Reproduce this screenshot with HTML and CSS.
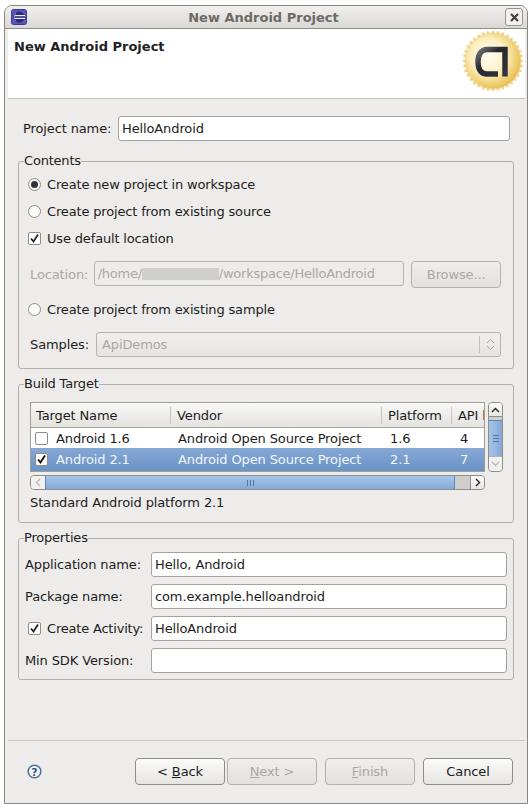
FILE: index.html
```html
<!DOCTYPE html>
<html lang="en">
<head>
<meta charset="UTF-8">
<meta name="viewport" content="width=device-width, initial-scale=1.0">
<title>New Android Project</title>
<link rel="stylesheet" href="styles.css">
</head>
<body>

    <div class="window">
        <div class="titlebar">
            <svg class="app-icon" width="16" height="16" viewBox="0 0 16 16">
                <rect x="0.5" y="0.5" width="15" height="15" rx="2" fill="#5a55b8" stroke="#3d3892"/>
                <circle cx="8" cy="8" r="5.6" fill="#2d2870"/>
                <rect x="3" y="6" width="11" height="1.2" fill="#e8e8f8"/>
                <rect x="3" y="8.8" width="11" height="1.2" fill="#e8e8f8"/>
                <path d="M6 3 A5.6 5.6 0 0 0 6 13 A7 7 0 0 1 6 3Z" fill="#8f8cd8"/>
            </svg>
            <div class="title">New Android Project</div>
            <div class="close">
                <svg width="9" height="9" viewBox="0 0 9 9">
                    <path d="M1 1 L8 8 M8 1 L1 8" stroke="#44433f" stroke-width="2.2" fill="none"/>
                </svg>
            </div>
        </div>

        <div class="banner">
            <h1>New Android Project</h1>
            <svg class="logo" width="64" height="64" viewBox="-32 -32 64 64">
                <defs>
                    <radialGradient id="gold" cx="42%" cy="42%" r="62%">
                        <stop offset="0" stop-color="#fffdf2"/>
                        <stop offset="0.5" stop-color="#fdf0c4"/>
                        <stop offset="1" stop-color="#e8bd48"/>
                    </radialGradient>
                    <linearGradient id="ink" x1="0" y1="0" x2="1" y2="1">
                        <stop offset="0" stop-color="#70737b"/>
                        <stop offset="0.4" stop-color="#25272e"/>
                        <stop offset="1" stop-color="#33363f"/>
                    </linearGradient>
                    <polygon id="tooth" points="-2.6,-27 0,-31 2.6,-27" fill="#efd485"/>
                    <g id="cross">
                        <use href="#tooth"/>
                        <use href="#tooth" transform="rotate(90)"/>
                        <use href="#tooth" transform="rotate(180)"/>
                        <use href="#tooth" transform="rotate(270)"/>
                    </g>
                </defs>
                <use href="#cross"/>
                <use href="#cross" transform="rotate(10)"/>
                <use href="#cross" transform="rotate(20)"/>
                <use href="#cross" transform="rotate(30)"/>
                <use href="#cross" transform="rotate(40)"/>
                <use href="#cross" transform="rotate(50)"/>
                <use href="#cross" transform="rotate(60)"/>
                <use href="#cross" transform="rotate(70)"/>
                <use href="#cross" transform="rotate(80)"/>
                <circle r="27.5" fill="url(#gold)"/>
                <path d="M12 15.5 V-11.5 H-6 C-12 -11.5 -15 -6 -15 1 C-15 8 -12 13 -6 13 H5" fill="none" stroke="url(#ink)" stroke-width="5.5"/>
            </svg>
        </div>

        <div class="content">
            <div class="project-row">
                <label class="project-label">Project name:</label>
                <div class="field project-field">HelloAndroid</div>
            </div>

            <fieldset class="group">
                <legend>Contents</legend>
                <div class="contents-body">
                    <div class="option"><span class="radio on"></span>Create new project in workspace</div>
                    <div class="option"><span class="radio"></span>Create project from existing source</div>
                    <div class="option">
                        <span class="check"><svg width="11" height="11" viewBox="0 0 11 11"><path d="M2 5.5 L4.5 8.5 L9 1.5" fill="none" stroke="#222" stroke-width="1.8"/></svg></span>
                        Use default location
                    </div>
                    <div class="location-row">
                        <label class="location-label disabled">Location:</label>
                        <div class="field location-field disabled">/home/<span class="redacted"></span>/workspace/HelloAndroid</div>
                        <div class="btn btn-browse is-off">Browse...</div>
                    </div>
                    <div class="option option-sample"><span class="radio"></span>Create project from existing sample</div>
                    <div class="samples-row">
                        <label class="samples-label">Samples:</label>
                        <div class="combo">
                            <span class="disabled">ApiDemos</span>
                            <span class="combo-arrows">
                                <svg width="9" height="13" viewBox="0 0 9 13"><path d="M1 5 L4.5 1.5 L8 5 M1 8 L4.5 11.5 L8 8" fill="none" stroke="#a9a8a5"/></svg>
                            </span>
                        </div>
                    </div>
                </div>
            </fieldset>

            <fieldset class="group">
                <legend>Build Target</legend>
                <div class="target-body">
                    <div class="target-top">
                        <div class="table">
                            <div class="table-head">
                                <div class="col col-name">Target Name</div>
                                <div class="col col-vendor">Vendor</div>
                                <div class="col col-platform">Platform</div>
                                <div class="col col-api">API level</div>
                            </div>
                            <div class="table-row row-plain">
                                <div class="col col-name"><span class="check"></span>Android 1.6</div>
                                <div class="col col-vendor">Android Open Source Project</div>
                                <div class="col col-platform">1.6</div>
                                <div class="col col-api">4</div>
                            </div>
                            <div class="table-row row-selected">
                                <div class="col col-name">
                                    <span class="check"><svg width="11" height="11" viewBox="0 0 11 11"><path d="M2 5.5 L4.5 8.5 L9 1.5" fill="none" stroke="#111" stroke-width="1.9"/></svg></span>Android 2.1
                                </div>
                                <div class="col col-vendor">Android Open Source Project</div>
                                <div class="col col-platform">2.1</div>
                                <div class="col col-api">7</div>
                            </div>
                        </div>
                        <div class="vscroll">
                            <div class="sb-btn sb-up"><svg width="9" height="6" viewBox="0 0 9 6"><path d="M1 5 L4.5 1.5 L8 5" fill="none" stroke="#222" stroke-width="1.4"/></svg></div>
                            <div class="vthumb"><span class="grip-v"></span></div>
                            <div class="sb-btn sb-down"><svg width="9" height="6" viewBox="0 0 9 6"><path d="M1 1 L4.5 4.5 L8 1" fill="none" stroke="#b5b4b1" stroke-width="1.2"/></svg></div>
                        </div>
                    </div>
                    <div class="hscroll">
                        <div class="sb-btn sb-left"><svg width="6" height="9" viewBox="0 0 6 9"><path d="M5 1 L1.5 4.5 L5 8" fill="none" stroke="#b5b4b1" stroke-width="1.2"/></svg></div>
                        <div class="hthumb"><span class="grip-h"></span></div>
                        <div class="htrough"></div>
                        <div class="sb-btn sb-right"><svg width="6" height="9" viewBox="0 0 6 9"><path d="M1 1 L4.5 4.5 L1 8" fill="none" stroke="#222" stroke-width="1.4"/></svg></div>
                    </div>
                    <div class="target-desc">Standard Android platform 2.1</div>
                </div>
            </fieldset>

            <fieldset class="group">
                <legend>Properties</legend>
                <div class="props-body">
                    <div class="prop-row">
                        <label class="prop-label">Application name:</label>
                        <div class="field prop-field">Hello, Android</div>
                    </div>
                    <div class="prop-row">
                        <label class="prop-label">Package name:</label>
                        <div class="field prop-field">com.example.helloandroid</div>
                    </div>
                    <div class="prop-row">
                        <label class="prop-label prop-check">
                            <span class="check"><svg width="11" height="11" viewBox="0 0 11 11"><path d="M2 5.5 L4.5 8.5 L9 1.5" fill="none" stroke="#222" stroke-width="1.8"/></svg></span>Create Activity:
                        </label>
                        <div class="field prop-field">HelloAndroid</div>
                    </div>
                    <div class="prop-row">
                        <label class="prop-label">Min SDK Version:</label>
                        <div class="field prop-field"></div>
                    </div>
                </div>
            </fieldset>
        </div>

        <div class="footer">
            <svg class="help" width="15" height="15" viewBox="0 0 15 15">
                <circle cx="7.5" cy="7.5" r="6.3" fill="#f8f9fb" stroke="#4a6f9c" stroke-width="1.5"/>
                <text x="7.5" y="11.5" class="help-mark">?</text>
            </svg>
            <div class="buttons">
                <div class="btn-pair">
                    <div class="btn"><span>&lt; <u>B</u>ack</span></div>
                    <div class="btn is-off"><span><u>N</u>ext &gt;</span></div>
                </div>
                <div class="btn is-off"><span><u>F</u>inish</span></div>
                <div class="btn"><span>Cancel</span></div>
            </div>
        </div>
    </div>

</body>
</html>
```

FILE: styles.css
```css
* {
    box-sizing: border-box;
}
body {
    margin: 0;
    background: #fff;
    font-family: "DejaVu Sans", sans-serif;
    font-size: 13px;
    letter-spacing: -0.12px;
    color: #1c1c1c;
}
.disabled {
    color: #a9a8a5;
}

/* window */
.window {
    display: flex;
    flex-direction: column;
    width: 524px;
    height: 799px;
    margin: 5px 0 0 4px;
    background: #edecea;
    border: 1px solid #8a8782;
    border-radius: 8px 8px 0 0;
}
.titlebar {
    display: flex;
    align-items: center;
    height: 23px;
    padding: 0 4px 0 6px;
    background: linear-gradient(#f1f0ee, #dad8d5);
    border-bottom: 1px solid #908d88;
    border-radius: 7px 7px 0 0;
}
.title {
    flex: 1;
    margin-right: 5px;
    text-align: center;
    font-weight: bold;
    letter-spacing: 0;
    color: #6b6a67;
}
.close {
    display: flex;
    justify-content: center;
    align-items: center;
    width: 18px;
    height: 18px;
    background: #f2f1ef;
    border: 1px solid #98968f;
    border-radius: 3px;
}
.banner {
    display: flex;
    justify-content: space-between;
    height: 70px;
    margin: 0 2px 0 3px;
    background: #fff;
    border-bottom: 1px solid #c9c7c3;
}
.banner h1 {
    margin: 9px 0 0 6px;
    font-size: 13px;
    line-height: 17px;
    letter-spacing: 0;
    color: #222;
}
.logo {
    display: block;
}

/* form */
.content {
    padding: 17px 0 0 13px;
}
.project-row {
    display: flex;
    align-items: center;
    padding-left: 5px;
}
.project-label {
    width: 95px;
}
.field {
    height: 25px;
    padding: 0 3px;
    line-height: 23px;
    white-space: nowrap;
    background: #fff;
    border: 1px solid #a5a3a0;
    border-radius: 3px;
}
.project-field {
    width: 392px;
}
.group {
    width: 496px;
    min-width: 0;
    margin: 7px 0 0;
    padding: 0;
    border: 1px solid #b1afab;
    border-radius: 3px;
}
.group:first-of-type {
    margin-top: 12px;
}
legend {
    margin-left: 5px;
    padding: 0;
    line-height: 16px;
    letter-spacing: -0.2px;
}

/* contents group */
.contents-body {
    padding: 2px 12px 11px 9px;
}
.option {
    display: flex;
    align-items: center;
    gap: 6px;
    height: 27px;
    letter-spacing: -0.16px;
}
.option-sample {
    margin-top: 8px;
}
.radio {
    flex: none;
    position: relative;
    width: 13px;
    height: 13px;
    background: #fbfbfa;
    border: 1px solid #8f8d89;
    border-radius: 50%;
}
.radio.on::after {
    content: "";
    position: absolute;
    top: 2px;
    left: 2px;
    width: 7px;
    height: 7px;
    background: #333;
    border-radius: 50%;
}
.check {
    flex: none;
    display: flex;
    justify-content: center;
    align-items: center;
    width: 13px;
    height: 13px;
    background: #fff;
    border: 1px solid #8f8d89;
    border-radius: 2px;
}
.location-row {
    display: flex;
    margin-top: 9px;
    padding-left: 2px;
}
.location-label {
    width: 64px;
    line-height: 27px;
}
.location-field {
    width: 312px;
    letter-spacing: -0.25px;
    background: #edecea;
    border-color: #b5b3af;
}
.redacted {
    display: inline-block;
    width: 77px;
    height: 12px;
    vertical-align: -2px;
    background: #cfcfcf;
}
.btn {
    display: flex;
    justify-content: center;
    align-items: center;
    width: 90px;
    height: 27px;
    white-space: pre;
    background: linear-gradient(#fafaf9, #e6e5e2);
    border: 1px solid #8f8d88;
    border-radius: 4px;
}
.btn.is-off {
    color: #a9a8a5;
    background: linear-gradient(#efeeec, #e2e1de);
    border-color: #b3b1ad;
}
.btn-browse {
    margin-left: 7px;
}
.samples-row {
    display: flex;
    align-items: center;
    margin-top: 9px;
    padding-left: 2px;
}
.samples-label {
    width: 66px;
}
.combo {
    display: flex;
    justify-content: space-between;
    align-items: center;
    width: 405px;
    height: 25px;
    padding-left: 5px;
    background: linear-gradient(#f1f0ee, #e5e4e1);
    border: 1px solid #b5b3af;
    border-radius: 3px;
}
.combo-arrows {
    display: flex;
    justify-content: center;
    align-items: center;
    width: 21px;
    height: 17px;
    border-left: 1px solid #c2c0bc;
}

/* build target group */
.target-body {
    padding: 10px 10px 11px 11px;
}
.target-top {
    display: flex;
    gap: 3px;
}
.table {
    width: 455px;
    height: 70px;
    overflow: hidden;
    background: #fff;
    border: 1px solid #9f9d99;
}
.table-head,
.table-row {
    display: flex;
    align-items: center;
}
.table-head {
    height: 25px;
    background: linear-gradient(#f8f8f7, #e3e2df);
    border-bottom: 1px solid #a8a6a2;
}
.table-row {
    height: 21px;
}
.row-plain {
    height: 20px;
}
.row-selected {
    height: 23px;
    color: #f2f5fa;
    background: linear-gradient(#86a8d5, #6a93c7);
}
.col {
    flex: none;
    white-space: nowrap;
    overflow: hidden;
}
.table-head .col {
    height: 17px;
    padding-left: 6px;
    line-height: 17px;
    border-left: 1px solid #c6c4c0;
}
.table-head .col-name {
    padding-left: 5px;
    border-left: 0;
}
.col-name {
    display: flex;
    align-items: center;
    gap: 8px;
    width: 139px;
    padding-left: 4px;
}
.col-vendor {
    width: 211px;
    padding-left: 8px;
}
.col-platform {
    width: 70px;
    padding-left: 9px;
}
.col-api {
    width: 33px;
    padding-left: 9px;
}
.vscroll {
    display: flex;
    flex-direction: column;
    width: 15px;
    height: 70px;
    background: #cfcecb;
    border: 1px solid #8f8d88;
    border-radius: 4px;
    overflow: hidden;
}
.sb-btn {
    flex: none;
    display: flex;
    justify-content: center;
    align-items: center;
    background: linear-gradient(#fafaf9, #e8e7e4);
}
.sb-up {
    height: 14px;
    border-bottom: 1px solid #8f8d88;
}
.sb-down {
    height: 15px;
    background: #f2f1ef;
    border-top: 1px solid #b3b1ad;
}
.vthumb {
    display: flex;
    flex: 1;
    justify-content: center;
    align-items: center;
    margin-top: 3px;
    background: linear-gradient(90deg, #a6c4e8, #84a9d8);
    border-top: 1px solid #5a85bb;
}
.grip-v {
    width: 6px;
    height: 7px;
    border-top: 1px solid #4f78ad;
    border-bottom: 1px solid #4f78ad;
    background: linear-gradient(#4f78ad, #4f78ad) center / 100% 1px no-repeat;
}
.hscroll {
    display: flex;
    width: 455px;
    height: 15px;
    margin-top: 3px;
    background: #cfcecb;
    border: 1px solid #8f8d88;
    border-radius: 4px;
    overflow: hidden;
}
.sb-left {
    width: 14px;
    background: #f2f1ef;
}
.sb-right {
    width: 14px;
    border-left: 1px solid #8f8d88;
}
.hthumb {
    display: flex;
    justify-content: center;
    align-items: center;
    width: 410px;
    background: linear-gradient(#a9c6e9, #85a9d8);
    border-left: 1px solid #5a85bb;
    border-right: 1px solid #5a85bb;
}
.htrough {
    flex: 1;
}
.grip-h {
    width: 7px;
    height: 6px;
    border-left: 1px solid #4f78ad;
    border-right: 1px solid #4f78ad;
    background: linear-gradient(#4f78ad, #4f78ad) center / 1px 100% no-repeat;
}
.target-desc {
    margin-top: 5px;
    line-height: 16px;
}

/* properties group */
.props-body {
    display: flex;
    flex-direction: column;
    gap: 7px;
    padding: 6px;
}
.prop-row {
    display: flex;
    align-items: center;
}
.prop-label {
    width: 126px;
    white-space: nowrap;
}
.prop-check {
    display: flex;
    align-items: center;
    gap: 6px;
    padding-left: 3px;
    letter-spacing: -0.2px;
}
.prop-field {
    width: 356px;
}

/* footer */
.footer {
    display: flex;
    justify-content: space-between;
    align-items: center;
    margin: auto 2px 0 3px;
    padding: 17px 12px 18px 19px;
    border-top: 1px solid #c9c7c3;
}
.help {
    display: block;
}
.help-mark {
    font-family: "DejaVu Sans", sans-serif;
    font-size: 11px;
    font-weight: bold;
    text-anchor: middle;
    fill: #2f5684;
}
.buttons {
    display: flex;
    gap: 8px;
}
.btn-pair {
    display: flex;
    gap: 2px;
}
```
